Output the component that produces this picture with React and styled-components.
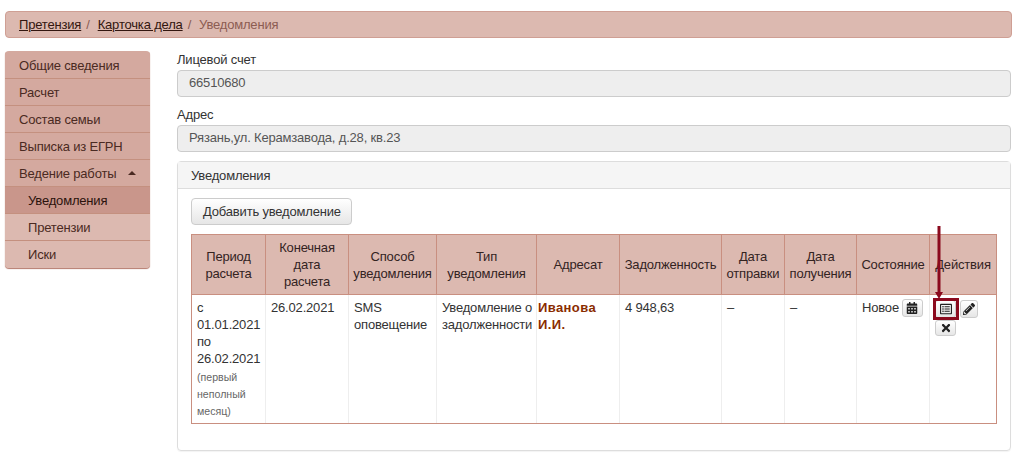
import React from "react";
import styled, { createGlobalStyle } from "styled-components";
import { FaCalendarAlt, FaRegListAlt, FaPencilAlt, FaTimes } from "react-icons/fa";

const Global = createGlobalStyle`
    html, body {
        margin: 0;
        background: #fff;
        font-family: "Liberation Sans", Arial, sans-serif;
        font-size: 13px;
        line-height: 17px;
        letter-spacing: -0.18px;
        color: #333;
    }
    * { box-sizing: border-box; }
`;

const Page = styled.div`
    position: relative;
    width: 1013px;
    height: 453px;
    padding: 11px 1px 0 5px;
    overflow: hidden;
`;

const Breadcrumb = styled.div`
    display: flex;
    align-items: center;
    height: 27px;
    padding: 0 13px 1px;
    background: #dcb9b0;
    border: 1px solid #cf9f94;
    border-radius: 4px;
    margin-bottom: 13px;
`;

const Crumb = styled.a`
    color: #33160f;
    text-decoration: underline;
`;

const Sep = styled.span`
    color: #8a5a50;
    padding: 0 8px 0 5px;
`;

const CrumbActive = styled.span`
    color: #8c5c52;
`;

const Columns = styled.div`
    display: flex;
    align-items: flex-start;
`;

const Sidebar = styled.nav`
    width: 145px;
    flex: none;
    margin-right: 27px;
    padding-top: 1px;
    border-radius: 4px;
    overflow: hidden;
    box-shadow: 0 1px 1px #b5796c;
    background: #d4a99f;
`;

const NavItem = styled.div`
    display: flex;
    align-items: center;
    height: 27px;
    padding-left: ${(p) => (p.$sub ? 23 : 14)}px;
    border-bottom: ${(p) => (p.$last ? 0 : "1px solid #c4907f")};
    background: ${(p) => (p.$active ? "#c9968b" : p.$sub ? "#dcb9b0" : "#d4a99f")};
    color: ${(p) => (p.$active ? "#2b120c" : "#4a2a22")};
`;

const Caret = styled.span`
    width: 0;
    height: 0;
    margin-left: 12px;
    border-left: 4px solid transparent;
    border-right: 4px solid transparent;
    border-bottom: 4px solid #4a2a22;
`;

const Content = styled.main`
    width: 834px;
    flex: none;
`;

const Label = styled.div`
    color: #333;
    height: 19px;
    line-height: 17px;
`;

const ReadOnly = styled.div`
    display: flex;
    align-items: center;
    height: 27px;
    padding: 0 11px 2px;
    margin-bottom: 9px;
    background: #eee;
    border: 1px solid #ccc;
    border-radius: 4px;
    color: #555;
`;

const Panel = styled.section`
    height: 290px;
    border: 1px solid #ddd;
    border-radius: 4px;
    box-shadow: 0 1px 1px rgba(0, 0, 0, 0.05);
`;

const PanelHead = styled.div`
    display: flex;
    align-items: center;
    height: 27px;
    padding: 0 13px;
    background: #f5f5f5;
    border-bottom: 1px solid #ddd;
`;

const PanelBody = styled.div`
    padding: 9px 13px;
`;

const Button = styled.button`
    display: block;
    height: 27px;
    padding: 0 11px 1px;
    width: 161px;
    margin-bottom: 9px;
    font: inherit;
    letter-spacing: inherit;
    white-space: nowrap;
    color: #333;
    background: linear-gradient(#fff, #e6e6e6);
    border: 1px solid #ccc;
    border-radius: 4px;
`;

const Table = styled.table`
    width: 806px;
    table-layout: fixed;
    border-collapse: separate;
    border-spacing: 0;
    border: 1px solid #c98f80;
`;

const Th = styled.th`
    height: 60px;
    padding: 4px;
    font-weight: normal;
    text-align: center;
    vertical-align: middle;
    color: #33231f;
    background: #dcb9b0;
    border-right: 1px solid #c98f80;
    border-bottom: 1px solid #c98f80;
    &:last-child {
        border-right: 0;
    }
`;

const Td = styled.td`
    height: 128px;
    padding: 4px 4px 4px 5px;
    vertical-align: top;
    border-right: 1px solid #eee;
    &:last-child {
        border-right: 0;
    }
`;

const Small = styled.small`
    display: block;
    padding-top: 2px;
    margin-bottom: -2px;
    font-size: 10.6px;
    letter-spacing: 0;
    color: #666;
`;

const Addressee = styled.span`
    display: block;
    margin-left: -4px;
    font-size: 13px;
    font-weight: bold;
    letter-spacing: 0.4px;
    color: #8a2c00;
`;

const StateRow = styled.div`
    display: flex;
    align-items: flex-start;
    gap: 3px;
`;

const Actions = styled.div`
    display: flex;
    flex-wrap: wrap;
    gap: 2px 4px;
    padding-top: 1px;
`;

const IconButton = styled.button`
    display: flex;
    align-items: center;
    justify-content: center;
    width: ${(p) => (p.$narrow ? 18 : 21)}px;
    height: ${(p) => (p.$short ? 16 : 18)}px;
    padding: 0;
    font-size: 12px;
    color: #222;
    background: linear-gradient(#fff, #e6e6e6);
    border: 1px solid #ccc;
    border-radius: 3px;
`;

const Highlight = styled.div`
    position: absolute;
    left: 933px;
    top: 298px;
    width: 26px;
    height: 22px;
    border: 3px solid #8b0a1e;
`;

const Arrow = styled.svg`
    position: absolute;
    left: 934px;
    top: 226px;
`;

const nav = ["Общие сведения", "Расчет", "Состав семьи", "Выписка из ЕГРН"];
const columns = [
    { w: 74, t: ["Период", "расчета"] },
    { w: 83, t: ["Конечная", "дата", "расчета"] },
    { w: 88, t: ["Способ", "уведомления"] },
    { w: 100, t: ["Тип", "уведомления"] },
    { w: 83, t: ["Адресат"] },
    { w: 102, t: ["Задолженность"] },
    { w: 63, t: ["Дата", "отправки"] },
    { w: 72, t: ["Дата", "получения"] },
    { w: 73, t: ["Состояние"] },
    { w: 66, t: ["Действия"] },
];

const App = () => (
    <Page>
        <Global />
        <Breadcrumb>
            <Crumb>Претензия</Crumb>
            <Sep>/</Sep>
            <Crumb>Карточка дела</Crumb>
            <Sep>/</Sep>
            <CrumbActive>Уведомления</CrumbActive>
        </Breadcrumb>
        <Columns>
            <Sidebar>
                {nav.map((n) => (
                    <NavItem key={n}>{n}</NavItem>
                ))}
                <NavItem>
                    Ведение работы
                    <Caret />
                </NavItem>
                <NavItem $sub $active>Уведомления</NavItem>
                <NavItem $sub>Претензии</NavItem>
                <NavItem $sub $last>Иски</NavItem>
            </Sidebar>
            <Content>
                <Label>Лицевой счет</Label>
                <ReadOnly>66510680</ReadOnly>
                <Label>Адрес</Label>
                <ReadOnly>Рязань,ул. Керамзавода, д.28, кв.23</ReadOnly>
                <Panel>
                    <PanelHead>Уведомления</PanelHead>
                    <PanelBody>
                        <Button>Добавить уведомление</Button>
                        <Table>
                            <colgroup>
                                {columns.map((c) => (
                                    <col key={c.t[0] + c.w} style={{ width: c.w }} />
                                ))}
                            </colgroup>
                            <thead>
                                <tr>
                                    {columns.map((c) => (
                                        <Th key={c.t[0] + c.w}>
                                            {c.t.map((l) => (
                                                <div key={l}>{l}</div>
                                            ))}
                                        </Th>
                                    ))}
                                </tr>
                            </thead>
                            <tbody>
                                <tr>
                                    <Td>
                                        с 01.01.2021 по 26.02.2021
                                        <Small>(первый неполный месяц)</Small>
                                    </Td>
                                    <Td>26.02.2021</Td>
                                    <Td>SMS оповещение</Td>
                                    <Td>Уведомление о задолженности</Td>
                                    <Td><Addressee>Иванова И.И.</Addressee></Td>
                                    <Td>4 948,63</Td>
                                    <Td>–</Td>
                                    <Td>–</Td>
                                    <Td>
                                        <StateRow>
                                            Новое
                                            <IconButton><FaCalendarAlt /></IconButton>
                                        </StateRow>
                                    </Td>
                                    <Td>
                                        <Actions>
                                            <IconButton><FaRegListAlt /></IconButton>
                                            <IconButton $narrow><FaPencilAlt /></IconButton>
                                            <IconButton $short><FaTimes /></IconButton>
                                        </Actions>
                                    </Td>
                                </tr>
                            </tbody>
                        </Table>
                    </PanelBody>
                </Panel>
            </Content>
        </Columns>
        <Arrow width="10" height="73" viewBox="0 0 10 73">
            <path d="M5 0V66" stroke="#8b0a1e" strokeWidth="3" fill="none" />
            <path d="M1 66H9L5 73Z" fill="#8b0a1e" />
        </Arrow>
        <Highlight />
    </Page>
);

export default App;
